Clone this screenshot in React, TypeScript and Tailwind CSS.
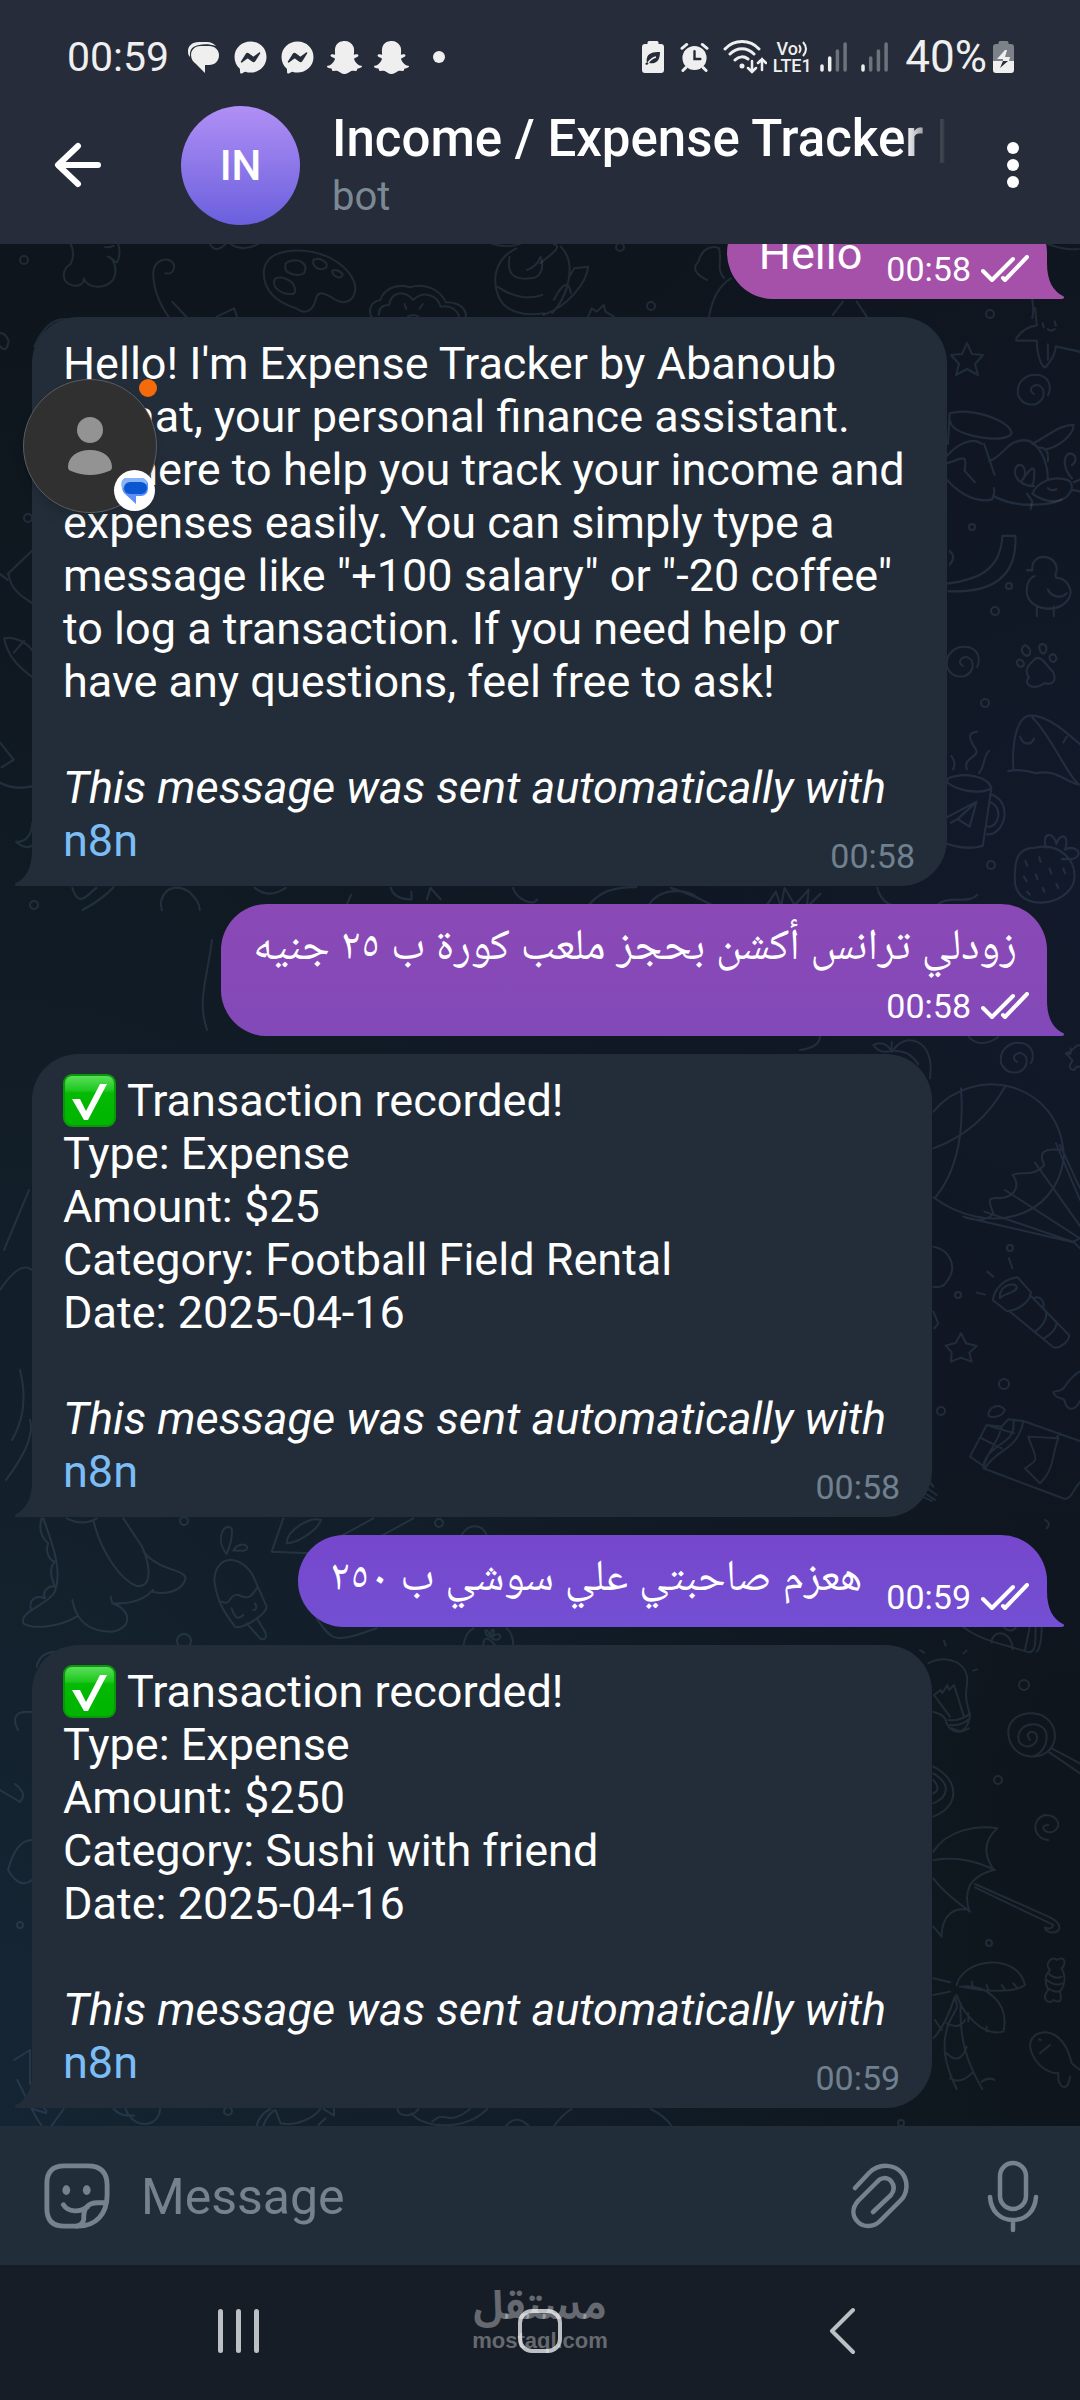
import React from "react";
import { FaFacebookMessenger } from "react-icons/fa6";
import { FaSnapchatGhost } from "react-icons/fa";

/* ---------- status bar icons ---------- */

function ChatsIcon() {
  return (
    <svg viewBox="0 0 35 35" className="size-[35px]" fill="#efefef" aria-hidden="true">
      <path d="M13 2h8c4 0 7 2 9 4-6-2-12-2-17-1C7 6 4 9 4 14v3c-2-2-2-4-2-6 0-5 4-9 11-9z" />
      <path d="M14 6h9c6 0 10 4 10 9 0 6-4 10-10 10h-4v8l-9-9c-3-2-5-5-5-9 0-5 4-9 9-9z" />
    </svg>
  );
}

function LeafBattery() {
  return (
    <svg viewBox="0 0 22 32" className="h-8 w-[22px]" aria-hidden="true">
      <path fill="#efefef" d="M7 0h8a1.500 1.500 0 0 1 1.500 1.500V3H19a3 3 0 0 1 3 3v23a3 3 0 0 1-3 3H3a3 3 0 0 1-3-3V6a3 3 0 0 1 3-3h2.500V1.500A1.500 1.500 0 0 1 7 0z" />
      <path fill="#262c39" d="M18 11c-7 0-12 1-13 6-1 2 0 4 0 4l-2 2 2 1 2-2c5 1 11 0 11-11z" />
      <path d="M6 22c2-3 4-5 8-6" stroke="#efefef" strokeWidth="1.500" fill="none" />
    </svg>
  );
}

function AlarmIcon() {
  return (
    <svg viewBox="0 0 30 31" className="h-[31px] w-[29px]" fill="none" stroke="#efefef" strokeLinecap="round" strokeWidth="3" aria-hidden="true">
      <circle cx="15" cy="16" r="12.500" fill="#efefef" stroke="none" />
      <path d="M2 6l5-4M28 6l-5-4M6 26l-3 3M24 26l3 3" />
      <path d="M15 9v8h6" stroke="#262c39" strokeWidth="2.500" />
    </svg>
  );
}

function WifiIcon() {
  return (
    <svg viewBox="0 0 44 34" className="h-[34px] w-11" fill="none" stroke="#efefef" strokeLinecap="round" strokeWidth="3" aria-hidden="true">
      <path d="M2 9C11-1 27-1 36 9M7 14c7-7 17-7 24 0M12 20c4-4 9-4 13-1" />
      <circle cx="19" cy="26" r="2.500" fill="#efefef" stroke="none" />
      <path d="M29 21v11M25 28l4 4 4-4M39 30V19M35 23l4-4 4 4" strokeWidth="2.500" />
    </svg>
  );
}

function VolteIcon() {
  return (
    <span className="flex w-[38px] flex-col items-center font-medium text-[#efefef]">
      <span className="flex items-center text-[18px] leading-4">
        Vo
        <svg viewBox="0 0 10 16" className="h-4 w-[10px]" fill="none" stroke="#efefef" strokeWidth="2" aria-hidden="true">
          <path d="M1 4q3 4 0 8M5 1q6 7 0 14" />
        </svg>
      </span>
      <span className="text-[18px] leading-[17px]">LTE1</span>
    </span>
  );
}

function Signal({ level }: { level: number }) {
  return (
    <svg viewBox="0 0 27 30" className="h-[30px] w-[27px]" strokeWidth="3.500" strokeLinecap="round" aria-hidden="true">
      {[24, 16, 9, 2].map((top, i) => (
        <path key={top} d={`M${2 + i * 7.7} ${top}V28`} stroke={i < level ? "#efefef" : "#6d727b"} />
      ))}
    </svg>
  );
}

function ChargeBattery() {
  return (
    <svg viewBox="0 0 21 32" className="h-8 w-[21px]" aria-hidden="true">
      <path fill="#7d8188" d="M7 0h7a1.500 1.500 0 0 1 1.500 1.500V3H18a3 3 0 0 1 3 3v15H0V6a3 3 0 0 1 3-3h2.500V1.500A1.500 1.500 0 0 1 7 0z" />
      <path fill="#efefef" d="M0 20h21v9a3 3 0 0 1-3 3H3a3 3 0 0 1-3-3z" />
      <path fill="#efefef" d="M12 9l-8 9h6v2h6l1-4h-5l2-7z" />
      <path fill="#262c39" d="M10 20h5l-8 7z" />
    </svg>
  );
}

function StatusBar() {
  return (
    <div className="flex h-[86px] items-center justify-between pt-7 pr-[66px] pl-[67px]">
      <div className="flex items-center gap-3 text-[#efefef]">
        <span className="mr-[5px] text-[41px] leading-10">00:59</span>
        <ChatsIcon />
        <FaFacebookMessenger className="size-[35px] p-px" />
        <FaFacebookMessenger className="size-[35px] p-px" />
        <FaSnapchatGhost className="size-[35px]" />
        <FaSnapchatGhost className="size-[35px]" />
        <span className="ml-3 size-3 rounded-full bg-[#efefef]" />
      </div>
      <div className="flex items-center text-[#efefef]">
        <LeafBattery />
        <span className="ml-4 flex items-center gap-[14px]">
          <AlarmIcon />
          <WifiIcon />
        </span>
        <span className="ml-[6px]"><VolteIcon /></span>
        <span className="ml-[9px] flex items-center gap-[14px]">
          <Signal level={2} />
          <Signal level={1} />
        </span>
        <span className="ml-[17px] text-[44px] leading-10">40%</span>
        <span className="ml-[6px]"><ChargeBattery /></span>
      </div>
    </div>
  );
}

function Header() {
  return (
    <header className="shrink-0 bg-[#262c39]">
      <StatusBar />
      <div className="flex h-[158px] items-center pr-[61px] pl-[54px]">
        <button type="button" aria-label="Back" className="shrink-0">
          <svg viewBox="0 0 48 46" className="h-[46px] w-12" fill="none" stroke="#fff" strokeWidth="6" strokeLinecap="round" strokeLinejoin="round">
            <path d="M24 4L4 23l20 19M5 23h39" />
          </svg>
        </button>
        <div className="ml-[79px] flex size-[119px] shrink-0 items-center justify-center rounded-full bg-linear-to-b from-[#b18ff5] to-[#6b5fdd] text-[42px] font-medium text-white">
          IN
        </div>
        <div className="ml-8 min-w-0 flex-1">
          <h1 className="w-[615px] max-w-full overflow-hidden mask-r-from-[93%] text-[51px] leading-[60px] font-medium whitespace-nowrap text-white">
            Income / Expense Tracker |
          </h1>
          <p className="mt-1 text-[40px] leading-[48px] text-[#7b8995]">bot</p>
        </div>
        <button type="button" aria-label="More options" className="flex shrink-0 flex-col gap-[5px]">
          <span className="size-3 rounded-full bg-white" />
          <span className="size-3 rounded-full bg-white" />
          <span className="size-3 rounded-full bg-white" />
        </button>
      </div>
    </header>
  );
}

/* ---------- wallpaper doodles ---------- */

const STAR = "M0-17L5-6 16-5 8 4 11 15 0 9-11 15-8 4-16-5-5-6Z";
const SPIRAL = "M0 2q-5-3-2-7 6-5 11 2 3 10-7 15-13 3-18-9-2-15 13-20 14-2 18 8 2 7-1 12";

const SPECKS: [number, number, number][] = [
  [24, 260, 4], [651, 306, 4], [990, 314, 4], [620, 247, 4], [972, 527, 3], [1009, 586, 3], [995, 611, 4],
  [985, 703, 4], [991, 865, 4], [28, 518, 4], [34, 905, 4], [1010, 1248, 3], [958, 1295, 3], [1004, 1384, 5],
  [941, 1411, 4], [184, 1521, 4], [184, 1641, 7], [439, 1523, 4], [1024, 1685, 5], [998, 1780, 4], [989, 1943, 3],
  [228, 2111, 4], [901, 2123, 3], [20, 1925, 3],
];

const TOP_DOODLES = [
  "M205 732q15 30 0 60c-30 20-25 60 10 65 20 3 30-10 28-22 10 30 60 35 85 5 15-25 5-65-15-70 15 0 25 30 30 10q8-25 0-48M330 738q-10 5-25 3",
  "M480 820c25 5 30-20 22-32-20-20-55-5-57 30 0 60 25 105 50 140M500 905l50 55M630 950l50-25 12 35",
  "M850 752C950 745 1030 810 1032 865 1030 905 1000 915 975 900 945 880 925 870 918 895 910 935 885 945 860 925 800 905 765 870 766 815 770 775 800 755 850 752Z",
  "M830 790q20-15 45-5 20 15 8 35-25 12-50-5-8-12-3-25zM910 780q20-10 38 10 5 18-18 18-25-8-20-28zM965 812q15-6 30 10 0 12-14 10-16-6-16-20zM800 835q25-8 50 15 15 25 0 32-30 3-50-20-8-16 0-27z",
  "M1085 960c-20-25-10-55 20-60 10-35 50-50 85-38 50-15 90 10 105 45 50 0 65 30 55 53M1100 945c0-20 10-30 30-30 5-35 40-50 70-15 30-30 70-15 80 20 30-5 50 10 55 35M1175 912l5 15M1228 912l-10 15M1185 950q17-10 30 0",
  "M1430 732c60 15 75 0 80 0M1500 745c-60 30-75 90-50 150 20 40 70 55 130 45M1480 770c-10 60 20 70 60 65 30 0 40-30 32-60M1445 860c40 30 90 40 130 25M1530 810q30-10 40-40",
  "M610 732q15 30 45 0M670 732q35 25 80 0",
];

const TOP_RIGHT_DOODLES = [
  "M0 790c50-40 60-50 40-58M60 740c50 50 20 150-25 200M85 830l15-25 40-5c-5 50-60 120-130 145M40 900q40-80 50-20",
  "M485 840c-20-10-50-30-25-55 10-40 40-50 60-40 10 40-10 60 15 90M490 955c10-60 30-100 65-120M850 945l30-40M920 905q20 30 35 55",
  "M140 950l10-25 15 10 20-20 5 20 25 15M1430 900q5 30 0 55M1475 732q50 20 90 15",
];

const RIGHT_DOODLES = [
  "M1190 270c60-15 165 15 180 50-5 30-150 15-175-20-5-10-8-20-5-30zM1185 350l5-80M1183 380c30-30 75-50 100-30M1183 400c40-10 60-30 50 20l30 30M1183 445c40 40 90 60 130 50q10-20 5-30M1290 350l30 80M1305 395c50-20 45-50 100-55 45 0 70 60 70 100M1315 485c80 40 180 20 200 10M1430 350c60-30 80-50 120-50 0 30-50 60-85 65M1445 360q35-5 30 35",
  "M1435 460c-50 0-70-40-45-55 20-5 25 30 10 40 20-25 40-50 35-10q0 20-8 25M1430 480c15-30 60-50 105-35 20 10 10 50-40 55-30 0-50-10-65-20zM1415 480l15 20-5 20M1475 465q10 10 25 3M1545 440c-20-20-30-50-10-65 25 0 25 20 10 30M1550 450l25-10M1545 470l30 5",
  "M1383 75q20-30 60-35l-5-45M1383 80l60 0c0 40 15 70 25 70 20-20 30-40 30-55l75 15M1460 35l3 10M1495 30l3 10M1475 50q10 8 20 0M1475 90v40",
  "M1183 715c80-10 155-30 160-125l38 0c5 110-70 150-195 145M1190 630q20 15 0 35",
  "M1430 680c-5-45 60-45 70-10 5 20-10 20 0 30 30 0 45 30 40 45-20 50-110 45-125 0-5-25 5-45 22-50M1415 680h14M1475 730c10 20 40 25 55 10M1443 775v25M1492 775v25",
  "M1420 960c-20-25 10-40 20-50 20-5 30 20 50 35 15 30-10 35-25 30-30 20-65 5-45-15zM1385 920c5-15 25 0 20 8-10 10-20 0-20-8zM1400 885c5-20 30 0 22 15-10 10-25-5-22-15zM1450 880c5-15 25-5 20 10-5 15-20 5-20-10zM1480 905c10-12 25 0 18 10-8 10-20 0-18-10z",
  "M1375 1200c-5-70 10-140 50-140 50 0 100 40 150 80M1430 1065c50 40 100 150 135 175M1360 1205c20-5 40-5 80 5 60-10 80 20 125 30M1395 1115c5 20 30 25 40 5M1520 1130l10-15",
  "M1183 1225c50-20 120-5 128 25-30 15-90 10-128-15zM1311 1250l-25 150c-30 8-60 8-103-5M1308 1265c70 20 40 110-10 105M1305 1285c45 15 25 70-5 65M1183 1325l85-40-20 65-35-20-20 10M1268 1285l-55 45M1240 1200c-15-35 50-30 20-60-20-30-10-35 10-38M1275 1210c20-20 10-45 30-58M1200 1200q10-15-5-35",
  "M1380 1500c-5-70 10-95 60-95 60-15 125 30 110 90-20 60-155 80-170 5zM1470 1405c-15-40 20-45 30-10 10-30 40-25 25 15 30-15 60 15 20 25h-30M1410 1440l5 12M1450 1430l4 12M1405 1480l8 12M1440 1475l5 12M1480 1460l5 12M1520 1460l5 12M1415 1520l8 8M1460 1510l5 10M1500 1500l5 10",
  "M130 1568c40-50 80-60 150-60M310 1568c20-60 120-60 150-30M655 1560l30-40 15 40 10-50 30 45 40-40-5 45 40-35M980 1510c10 40 40 50 100 55M1140 1568c40-50 100-10 130-40M380 1510q70 20 130 50",
];

const BALLOON_DOODLES = [
  "M220 75c20-10 40-5 55 18-20 5-40 5-55-18zM278 95c30-60 130-45 112 80M285 93c30 0 50 10 70 40M275 65v25M0 90c40-5 60-20 60-42M505 48c20 30 60 25 90 3",
  "M400 275C520 130 780 180 792 410 770 600 560 650 400 532M483 205c10 140-15 250-75 325M615 200c-50 90-120 150-215 185M490 590c50 20 80 5 90-10-10-30-25-50 20-45 50-5 60-40 38-70 25-15 60 10 95-30-20-40 0-50 50-45M705 428l135 190M768 370l72 170M780 375l60 130M615 510l225 145M553 575l265 90M495 592l325 75M820 665l20-10M820 665l20 20",
  "M797 100q20 10 15-15M840 75c-20 0-10 15-42 25l20 22q-20 25 5 28 5-12 15-10M400 680c50 10 75 60 40 105q-10 20-40 15M400 875l15 35-12 15",
  "M578 840c10-50 50-65 75-68l40 45c-5 35-45 55-72 57zM600 835c-5-40 45-50 50-35 5 15-30 20-45 30M630 875l130 107c20 5 50-20 47-37L690 825M705 935c30-20 40-50 30-65M732 955q35-20 38-45M700 835c20-10 35 10 30 25M530 818l25 6M562 755l18 15M627 715l10 30",
  "M483 940l15 30 32 8-22 20 7 27-32-12-30 12 2-28-18-20 30-8zM760 1115c50-5 20-20 78-60M760 1118c10 25 35 10 35 30 10 30 35 20 45-5",
  "M510 1310l50-95 45 5 20-22 45 5 170 60M510 1310l40 28M605 1220c-10 50-45 75-55 125l245 92c20 0 25-30 45-50M560 1215l82 25M545 1255l60 30M670 1205c-20 90-80 80-115 140M640 1205c10 70-70 60-90 130M685 1250l90 5c-20 50-10 90-55 135l-45-45c50-30 30-30 10-95M780 1240l-12 15M565 1185c0-20 30-40 50-15-10 25-50 25-50 15z",
  "M290 1395l105 48M320 1385l85 55M340 1375l70 50M355 1355l45 45M365 1350l35 50M735 1500q20 10 5 25",
];

const PALM_DOODLES = [
  "M482 135c60 50 140 60 205 82 20 0 20-30 20-80M575 188c0-40 60-40 63 20M690 137l-15 73M610 140q25 25 40-3M725 140q0 60-15 75",
  "M385 250c50-30 130-5 115 70-5 30 0 50 10 85-5 60-60 70-75 10-15-20-35-15-35-20M445 420q40 5 65-20M450 435q35 5 60-20M455 445l30 10 22-10M450 410L402 345l20-15 5 10 15-25 5 15 15-15 30 95M360 210l12 8M432 182l5 15M500 212l-10 8M520 272l12-4",
  "M625 450c10-70 140-70 140 20-5 85-145 80-140-20zM755 505l85 45M745 515l95 65M690 480c-20-20 10-35 20-15 10 40-55 50-55 5 5-50 85-50 85 0 0 40-30 60-50 60",
  "M400 560c80 40 80 120 0 150M400 580c50 30 50 70 0 90M400 600q25 30 0 40M745 735c-30 0-10 30 15 20 30-20 10-50-25-50-40 10-40 70 10 75",
  "M400 815c40-65 130-80 192-70-50 45-35 90-10 125-80 20-90 70-75 120-50-10-80 20-82 75M400 840c70-10 120 0 185 30M400 895c30 40 70 70 110 100M400 1040l25 30M525 912l225 100c40 20 35 50 0 45q-15-5-15-15 20 10 25-7L525 922",
  "M400 1195l50 12M470 1215c20-80 180-100 205 0-30 25-120 20-195 5 80-10 150 50 130 135-60 15-120-50-140-110M400 1245l50-10M405 1320l20 30M400 1375c30-30 50-80 65-125 5 20 10 30 0 45-60 90-20 180 5 232M482 1270c-5 110 20 180 65 257M440 1330q40 20 55-10M440 1420q40 40 60-20M450 1495q35 20 70-20M515 1205l5 20M560 1215l5 15M605 1215l10 15M640 1210l10 12M505 1300v25M560 1340v15M545 1505q20-15 38-5",
  "M750 1170c-20-20 10-45 20-30 25-15 30 10 15 25 15 30 10 50-5 70 10 40-10 30-20 25-10 15-40 0-15-30-10-20-15-40 5-60zM745 1180q20 20 40 10M740 1200q25 20 48 10M745 1225q20 15 35 8",
  "M690 1400c0-60 100-70 125 50l25 20M690 1400c10 50 50 80 85 80l0 20c10 30 30 30 35-10M720 1420l30-25M717 1378l5 2",
];

const DINO_DOODLES = [
  "M130 115c20 60 60 150 35 220-20 40-110 60-95 95 30 20 110 10 160-20M125 115c-10 30 0 60 20 75-10 20 0 50 20 55-20 20-10 50 0 75-20-5-40 15-30 35-40-15-50 20-40 35M280 120c20 90 80 180 130 198 60 5 30-90 15-120L370 115M430 215c50 60 120 50 127 80-10 40-60 50-100 40 10-25-10 40-120 35l-5-20M337 370c60 20 60 75 0 85-80 0-110-40-120-95M200 115q50 25 90 0",
  "M643 300c5-80 80-75 115-15l42 95c0 20-70 70-95 60-30-40-55-75-62-140zM665 365c30 15 20-25 50-20 30 15 40 5 55-20M740 430l40 45c20 10 20-10 15-20l-25-40M695 385c10 30 20 35 35 20M765 370q10 20-5 20M680 222c-40-50 0-100 15-75 5 30-10 60-15 75zM700 212c10-20 40-25 42-8-5 15-30 5-42 8z",
  "M850 115L815 215l115 5M860 190c0-40 70-80 103-70-10 30-70 70-103 70zM1120 115l-100 55M1240 115l-100 55M1385 165c20-35 60-35 75 0M950 415c40 60 50 70 120 50l60-20M1390 500c5-40 20-50 30-55M1540 500q0-40-20-55M1450 495c0-30 20-20 35 0M1465 470c-20-20 0-30 5 0 5-35 20-20 5 2 15-15 30-10 25 2-10 10-20 5-25-2M110 560q10-45 60-45",
];

const BOTTOM_DOODLES = [
  "M50 0c30 60 50 110 70 135M95 87l38 12q5-10-5-12M150 137l35-50M330 87c20 20 30 20 60 20M365 87c20 60 95 60 100 0M745 137q10-35 40-50M765 137q10-30 30-45M800 90l15 40c50 10 100-20 115-43M940 87l30 20v-20M925 135l20-20M1155 87c0 20 40 30 60 0M1195 100c40 50 160 50 220-13M1255 125c40-40 40 20 110-38M1470 137q30-35 65 0M1610 137q25-35 50-50M1890 87q40 20 60 50",
];

const MIDDLE_DOODLES = [
  "M0 690l22 15M22 690l70-60M25 690c5 40 40 60 67 75M12 858c30-5 65 10 80 30M12 858c10 50 50 80 80 100M40 895l30-30M0 1130l40 45-35 20M0 1235q40 20 92 10M47 1390c30 0 45-20 47-50M47 1390q25 20 47 10M0 95q20 20 25-15-10-20-25-20M100 95q40-80 100-70",
  "M210 1510c20 60 50 10 70 0M240 1568c40-20 70-40 90-60M470 1540c10-30 40-40 80-20 20 20 30 30 30 48M470 1568q-5-20 0-30M740 1510q40 30 90 0M1000 1568l20-40M1135 1510q10 30 60 30v-20M1240 1540l10-30 30 30M1490 1510c10 30 60 50 70 30",
];

function Doodles({ paths, transform }: { paths: string[]; transform: string }) {
  return (
    <g transform={transform} strokeWidth="6">
      {paths.map((d) => (
        <path key={d} d={d} />
      ))}
    </g>
  );
}

function Wallpaper() {
  return (
    <svg
      viewBox="0 244 1080 1882"
      preserveAspectRatio="xMidYMax slice"
      className="absolute inset-0 size-full"
      fill="none"
      stroke="#8fb1d6"
      strokeOpacity="0.14"
      strokeLinecap="round"
      strokeLinejoin="round"
      aria-hidden="true"
    >
      <g strokeWidth="2">
        {SPECKS.map(([x, y, r]) => (
          <circle key={`${x}-${y}`} cx={x} cy={y} r={r} />
        ))}
        <path d={STAR} transform="translate(967 360)" />
        <path d={SPIRAL} transform="translate(1034 392)" />
        <path d={SPIRAL} transform="translate(963 664)" />
        <path d={SPIRAL} transform="translate(1017 1060)" />
        <path d="M212 940c-5 40-15 60-5 90M4 1250l25-60M0 1290q20-30 32-20M20 1370q10 40-8 70M6 1480q30-40 24-60M0 1790l20 12q8-8-5-18M18 1730q-10-20 14-18M8 1870q8-30 24-30M8 1870q12 20 24 10M14 2060l16-10v34" />
      </g>
      <Doodles paths={TOP_DOODLES} transform="scale(.3443 .3333)" />
      <Doodles paths={TOP_RIGHT_DOODLES} transform="translate(540 0) scale(.3443 .3333)" />
      <Doodles paths={MIDDLE_DOODLES} transform="translate(0 310) scale(.3443 .3827)" />
      <Doodles paths={RIGHT_DOODLES} transform="translate(540 310) scale(.3443 .3827)" />
      <Doodles paths={BALLOON_DOODLES} transform="translate(800 1020) scale(.3333)" />
      <Doodles paths={PALM_DOODLES} transform="translate(800 1580) scale(.3333)" />
      <Doodles paths={DINO_DOODLES} transform="translate(0 1480) scale(.3333)" />
      <Doodles paths={BOTTOM_DOODLES} transform="translate(0 2080) scale(.3443 .3333)" />
    </svg>
  );
}

/* ---------- messages ---------- */

function SentTime({ time }: { time: string }) {
  return (
    <span className="flex items-center gap-[10px] text-[34px] leading-10 text-white" dir="ltr">
      {time}
      <svg viewBox="0 0 48 28" className="h-7 w-12" fill="none" stroke="#fff" strokeWidth="4" strokeLinecap="round" strokeLinejoin="round" role="img" aria-label="Read">
        <path d="M2 16l9 9L32 4M22 23l2 2L46 2" />
      </svg>
    </span>
  );
}

function Outgoing({ text, time, tone, tail, rtl, stacked }: { text: string; time: string; tone: string; tail: string; rtl?: boolean; stacked?: boolean }) {
  return (
    <div className={`relative flex self-end rounded-[46px] rounded-br-none pt-5 pr-[18px] pb-[10px] pl-8 ${tone} ${stacked ? "flex-col items-end" : "items-end gap-6"}`}>
      <p
        dir={rtl ? "rtl" : "ltr"}
        className={`mb-[9px] whitespace-nowrap text-white ${rtl ? "pb-3 text-[44px] leading-[41px]" : "text-[45px] leading-[53px]"} ${stacked ? "mr-3" : ""}`}
      >
        {text}
      </p>
      <SentTime time={time} />
      <svg viewBox="0 0 17 36" className={`absolute bottom-0 left-full h-9 w-[17px] ${tail}`} fill="currentColor" aria-hidden="true">
        <path d="M0 0C0 18 6 28 16 33 18 34 17 36 15 36H0z" />
      </svg>
    </div>
  );
}

function Incoming({ children, time }: { children: React.ReactNode; time: string }) {
  return (
    <div className="relative w-fit max-w-[915px] self-start rounded-[46px] rounded-bl-none bg-[#222d39] pt-5 pb-[10px] text-[45px] leading-[53px] text-white">
      <svg viewBox="0 0 17 36" className="absolute right-full bottom-0 h-9 w-[17px] text-[#222d39]" fill="currentColor" aria-hidden="true">
        <path d="M17 0C17 18 11 28 1 33-1 34 0 36 2 36H17z" />
      </svg>
      <div className="pr-8 pl-[31px]">
        {children}
        <p className="mt-[53px] pr-[14px] italic">This message was sent automatically with</p>
      </div>
      <div className="flex items-end justify-between pr-8 pl-[31px]">
        <a href="#n8n" className="mb-[9px] text-[#7cbdf5]">n8n</a>
        <span className="text-[34px] leading-10 text-[#71808e]">{time}</span>
      </div>
    </div>
  );
}

function CheckEmoji() {
  return (
    <svg viewBox="0 0 53 53" className="mr-[11px] size-[53px]" role="img" aria-label="Done">
      <defs>
        <linearGradient id="check-face" x1="0" y1="0" x2="0" y2="1">
          <stop offset="0" stopColor="#5fe05f" />
          <stop offset="0.300" stopColor="#1fc81f" />
          <stop offset="0.350" stopColor="#04ba04" />
          <stop offset="1" stopColor="#00b400" />
        </linearGradient>
      </defs>
      <rect x="1" y="1" width="51" height="51" rx="8" fill="url(#check-face)" stroke="#0a980a" strokeWidth="2" />
      <path d="M9 25h8l6 12L37 10h7L25 46h-4z" fill="#fff" />
    </svg>
  );
}

function Transaction({ amount, category, time }: { amount: string; category: string; time: string }) {
  return (
    <Incoming time={time}>
      <p className="flex">
        <CheckEmoji />
        Transaction recorded!
      </p>
      <p>Type: Expense</p>
      <p>Amount: {amount}</p>
      <p>Category: {category}</p>
      <p>Date: 2025-04-16</p>
    </Incoming>
  );
}

function ChatHead() {
  return (
    <div className="absolute top-[135px] left-[23px] size-[134px]">
      <div className="flex size-full items-center justify-center rounded-full border border-[#5a5d60] bg-[#303030] shadow-lg">
        <svg viewBox="0 0 44 58" className="h-[58px] w-11" fill="#929392" aria-hidden="true">
          <circle cx="22" cy="13" r="13" />
          <path d="M0 50C0 40 9 33 22 33s22 7 22 17q0 3-3 4-19 8-38 0-3-1-3-4z" />
        </svg>
      </div>
      <span className="absolute top-0 right-0 size-[18px] rounded-full bg-[#f56a0a]" />
      <span className="absolute right-[2px] bottom-[2px] flex size-[41px] items-center justify-center rounded-full bg-white">
        <svg viewBox="0 0 28 28" className="size-7" aria-hidden="true">
          <path d="M6 1h14a7 7 0 0 1 7 8v3a7 7 0 0 1-7 7h-5v8L3 16C0 12-1 1 6 1z" fill="#5b8ff9" />
          <path d="M6 1h14c4 0 6 3 6 6H8c-4 0-6 3-6 6C-1 8 0 1 6 1z" fill="#8ab4f8" />
          <rect x="3" y="5" width="23" height="12" rx="6" fill="#0b57d0" />
        </svg>
      </span>
    </div>
  );
}

function Chat() {
  return (
    <main className="relative flex min-h-0 flex-1 flex-col justify-end overflow-hidden bg-[radial-gradient(ellipse_at_100%_35%,#12192a_0%,transparent_50%),radial-gradient(ellipse_at_0%_95%,#152533_0%,transparent_70%)] bg-[#0e151c]">
      <Wallpaper />
      <div className="relative flex flex-col gap-[18px] pr-[33px] pb-[18px] pl-8">
        <Outgoing text="Hello" time="00:58" tone="bg-[#a551aa]" tail="text-[#a551aa]" />
        <Incoming time="00:58">
          <p>
            Hello! I'm Expense Tracker by Abanoub Refaat, your personal finance assistant. I'm here to help you
            track your income and expenses easily. You can simply type a message like "+100 salary" or "-20
            coffee" to log a transaction. If you need help or have any questions, feel free to ask!
          </p>
        </Incoming>
        <Outgoing
          text="زودلي ترانس أكشن بحجز ملعب كورة ب ٢٥ جنيه"
          time="00:58"
          tone="bg-linear-to-b from-[#8a49b5] to-[#8349b9]"
          tail="text-[#8349b9]"
          rtl
          stacked
        />
        <Transaction amount="$25" category="Football Field Rental" time="00:58" />
        <Outgoing
          text="هعزم صاحبتي علي سوشي ب ٢٥٠"
          time="00:59"
          tone="bg-linear-to-b from-[#7647cc] to-[#734fd3]"
          tail="text-[#734fd3]"
          rtl
        />
        <Transaction amount="$250" category="Sushi with friend" time="00:59" />
      </div>
      <ChatHead />
    </main>
  );
}

/* ---------- composer and navigation ---------- */

function Composer() {
  return (
    <form className="flex h-[139px] shrink-0 items-center bg-[#222d3a] pr-10 pl-[43px] text-[#758391]">
      <button type="button" aria-label="Stickers" className="shrink-0">
        <svg viewBox="0 0 70 70" className="size-[68px]" fill="none" stroke="currentColor" strokeWidth="5" strokeLinecap="round" strokeLinejoin="round">
          <path d="M22 4H46Q66 4 66 24V34C66 54 54 66 36 66H22Q4 66 4 48V22Q4 4 22 4Z" />
          <path d="M65 42H56C46 42 42 48 42 56Q43 64 35 66M21 44C26 52 38 52 46 46" />
          <ellipse cx="24" cy="29" rx="4" ry="5" fill="currentColor" stroke="none" />
          <ellipse cx="45" cy="29" rx="4" ry="5" fill="currentColor" stroke="none" />
        </svg>
      </button>
      <input
        type="text"
        aria-label="Message"
        placeholder="Message"
        className="ml-[30px] min-w-0 flex-1 bg-transparent pt-[2px] text-[50px] leading-[60px] outline-none placeholder:text-[#758391]"
      />
      <button type="button" aria-label="Attach file" className="shrink-0">
        <svg viewBox="0 0 58 66" className="h-[66px] w-[58px]" fill="none" stroke="currentColor" strokeWidth="4.500" strokeLinecap="round" strokeLinejoin="round">
          <path d="M4 25L18 10C29-1 44 2 51 10 58 19 56 31 50 37L29 58C22 65 12 64 7 59 1 53 1 45 7 38L26 19C30 14 36 14 40 18 44 23 43 28 40 32L22 49" />
        </svg>
      </button>
      <button type="button" aria-label="Record voice message" className="ml-[77px] shrink-0">
        <svg viewBox="0 0 54 74" className="h-[74px] w-[54px]" fill="none" stroke="currentColor" strokeWidth="4.500" strokeLinecap="round">
          <rect x="14" y="4" width="26" height="46" rx="13" />
          <path d="M4 38C5 52 14 61 27 61S49 52 50 38M27 61V71" />
        </svg>
      </button>
    </form>
  );
}

function NavBar() {
  return (
    <nav className="relative h-[135px] shrink-0 bg-[#161d26] px-[87px] text-[#bcbfc3]" aria-label="System navigation">
      <div className="grid h-full grid-cols-3 place-items-center pb-1">
        <button type="button" aria-label="Recent apps" className="flex gap-[13px]">
          <span className="h-11 w-[5px] rounded-full bg-current" />
          <span className="h-11 w-[5px] rounded-full bg-current" />
          <span className="h-11 w-[5px] rounded-full bg-current" />
        </button>
        <button type="button" aria-label="Home" className="size-11 rounded-[14px] border-4 border-current" />
        <button type="button" aria-label="Back">
          <svg viewBox="0 0 26 48" className="h-12 w-[26px]" fill="none" stroke="currentColor" strokeWidth="4" strokeLinecap="round" strokeLinejoin="round">
            <path d="M24 3L3 24l21 21" />
          </svg>
        </button>
      </div>
      <div className="pointer-events-none absolute inset-x-0 top-5 flex flex-col items-center text-white/35">
        <span dir="rtl" className="font-['Noto_Sans_Arabic','DejaVu_Sans',sans-serif] text-[40px] leading-[44px] font-bold">مستقل</span>
        <span className="font-['Liberation_Sans',Arial,sans-serif] text-[22px] leading-6 font-bold">mostaql.com</span>
      </div>
    </nav>
  );
}

export default function App() {
  return (
    <div className="flex h-screen flex-col bg-[#0e151c] font-[Roboto,'Noto_Naskh_Arabic','Noto_Sans_Arabic','DejaVu_Sans',sans-serif]">
      <Header />
      <Chat />
      <Composer />
      <NavBar />
    </div>
  );
}
